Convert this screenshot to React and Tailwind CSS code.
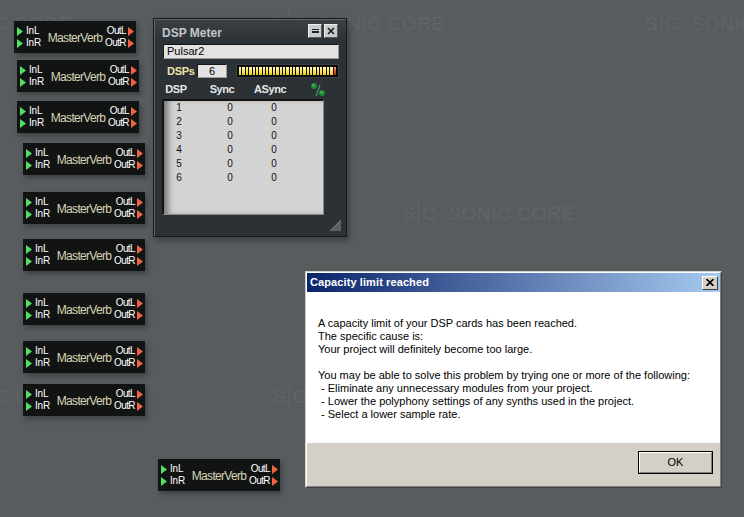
import React from 'react'

const modules = [
    'left-[14px] top-[21px]',
    'left-[17px] top-[60px]',
    'left-[17px] top-[101px]',
    'left-[23px] top-[143px]',
    'left-[23px] top-[192px]',
    'left-[23px] top-[239px]',
    'left-[23px] top-[293px]',
    'left-[23px] top-[341px]',
    'left-[23px] top-[384px]',
    'left-[158px] top-[459px]',
]

const watermarks = [
    'left-[-101px] top-[11px]',
    'left-[272px] top-[11px]',
    'left-[645px] top-[11px]',
    'left-[29px] top-[201px]',
    'left-[402px] top-[201px]',
    'left-[-100px] top-[384px]',
    'left-[273px] top-[384px]',
]

const dspRows = [1, 2, 3, 4, 5, 6]
const segments = Array.from({ length: 29 }, (_, i) => i)

const Watermark = ({ className }) => (
    <div className={`absolute ${className} flex items-center h-[24px] whitespace-nowrap text-white/[0.06] font-['Liberation_Sans',sans-serif] text-[19px] leading-none select-none`}>
        <span>S</span>
        <span className="mx-[3px] w-[1px] h-[24px] bg-white/[0.06]" />
        <span>C</span>
        <span className="ml-[13px] tracking-[0.6px]">SONIC CORE</span>
    </div>
)

const InPort = ({ label }) => (
    <div className="flex items-center h-[12px] gap-[3px]">
        <svg className="shrink-0" width="6" height="9" viewBox="0 0 6 9">
            <polygon points="0,0 6,4.5 0,9" fill="#52e05e" />
        </svg>
        <span className="text-[10px] leading-[12px] text-white tracking-[-0.2px]">{label}</span>
    </div>
)

const OutPort = ({ label }) => (
    <div className="flex items-center h-[12px] gap-[2px]">
        <span className="text-[10px] leading-[12px] text-white tracking-[-0.6px]">{label}</span>
        <svg className="shrink-0" width="6" height="9" viewBox="0 0 6 9">
            <polygon points="0,0 6,4.5 0,9" fill="#ee6444" />
        </svg>
    </div>
)

const Module = ({ className }) => (
    <div className={`absolute ${className} w-[122px] h-[32px] bg-[#121413] shadow-[2px_3px_5px_rgba(0,0,0,0.3)] flex items-center font-['Liberation_Sans',sans-serif]`}>
        <div className="w-[30px] shrink-0 flex flex-col pl-[3px]">
            <InPort label="InL" />
            <InPort label="InR" />
        </div>
        <div className="flex-1 text-center text-[12px] text-[#d9d5b8] tracking-[-0.7px] whitespace-nowrap pt-[1px]">MasterVerb</div>
        <div className="w-[30px] shrink-0 flex flex-col items-end pr-[2px]">
            <OutPort label="OutL" />
            <OutPort label="OutR" />
        </div>
    </div>
)

const TitleButton = ({ children }) => (
    <div className="w-[14px] h-[14px] bg-[#c9cbcd] border border-t-[#eeeeee] border-l-[#eeeeee] border-b-[#555a5e] border-r-[#555a5e] flex items-center justify-center">
        {children}
    </div>
)

const DspMeter = () => (
    <div className="absolute left-[153px] top-[18px] w-[194px] h-[219px] bg-[#2c3135] border border-[#171a1d] shadow-[2px_3px_6px_rgba(0,0,0,0.35)] font-['Liberation_Sans',sans-serif]">
        <div className="h-full border-t border-l border-[#5f6468] flex flex-col">
            {/* Title */}
            <div className="h-[22px] flex items-center pl-[7px] pr-[8px] bg-[linear-gradient(to_bottom,#3a4044,#2c3135)]">
                <span className="flex-1 text-[12px] font-bold text-[#c2c6ca] pt-[3px]">DSP Meter</span>
                <div className="flex gap-[2px]">
                    <TitleButton>
                        <div className="flex flex-col gap-[1px]">
                            <div className="w-[7px] h-[1px] bg-[#222]" />
                            <div className="w-[7px] h-[2px] bg-[#222]" />
                        </div>
                    </TitleButton>
                    <TitleButton>
                        <svg width="8" height="8" viewBox="0 0 8 8">
                            <path d="M1 1 L7 7 M7 1 L1 7" stroke="#1a1a1a" strokeWidth="1.6" />
                        </svg>
                    </TitleButton>
                </div>
            </div>

            {/* Name field */}
            <div className="ml-[8px] mt-[2px] w-[176px] h-[15px] bg-[#e2e2e2] border border-[#151515] border-b-[#9a9a9a] border-r-[#9a9a9a] flex items-center pl-[3px] text-[11px] text-black">
                Pulsar2
            </div>

            {/* DSPs row */}
            <div className="mt-[5px] flex items-center h-[14px]">
                <span className="ml-[12px] w-[30px] text-[11px] font-bold text-[#ede2a6] tracking-[-0.3px]">DSPs</span>
                <div className="w-[30px] h-[14px] bg-[#e2e2e2] border border-[#151515] border-b-[#9a9a9a] border-r-[#9a9a9a] flex items-center justify-center text-[11px] text-black">
                    6
                </div>
                <div className="ml-[9px] w-[103px] h-[14px] bg-[#0c0c0c] border border-[#3b3f42] p-[2px] flex gap-[1px]">
                    {segments.map((i) => (
                        <div
                            key={i}
                            className={i === segments.length - 1
                                ? 'flex-1 bg-[linear-gradient(to_bottom,#ff9a9a,#e63a3a_60%,#c02828)]'
                                : 'flex-1 bg-[linear-gradient(to_bottom,#fffcd0,#fbe852_50%,#e6cc30)]'}
                        />
                    ))}
                </div>
            </div>

            {/* Header */}
            <div className="mt-[4px] h-[14px] flex items-center pl-[7px] text-[11px] font-bold text-[#e6e8ea] tracking-[-0.4px]">
                <span className="w-[28px] text-center">DSP</span>
                <span className="w-[64px] text-center">Sync</span>
                <span className="w-[30px] text-center">ASync</span>
                <svg className="ml-[26px]" width="16" height="15" viewBox="0 0 16 15">
                    <line x1="10" y1="3" x2="6" y2="14" stroke="#3c8c72" strokeWidth="1.4" />
                    <circle cx="4" cy="4" r="3" fill="#1f8a2e" />
                    <circle cx="3.3" cy="3.2" r="1" fill="#5fd06a" />
                    <circle cx="12" cy="11" r="3" fill="#1f8a2e" />
                    <circle cx="11.3" cy="10.2" r="1" fill="#5fd06a" />
                </svg>
            </div>

            {/* List */}
            <div className="ml-[7px] mt-[3px] w-[162px] h-[116px] bg-[#d3d3d3] border-t-2 border-l-2 border-[#141414] border-r border-b border-r-[#8a8a8a] border-b-[#8a8a8a] shadow-[inset_7px_0_6px_-3px_rgba(0,0,0,0.45)]">
                {dspRows.map((n) => (
                    <div key={n} className="grid grid-cols-[30px_72px_16px] h-[14px] items-center text-[10px] text-[#111] leading-none">
                        <span className="text-center">{n}</span>
                        <span className="text-center">0</span>
                        <span className="text-center">0</span>
                    </div>
                ))}
            </div>

            {/* Grip */}
            <div className="flex-1 flex items-end justify-end pr-[5px] pb-[5px]">
                <svg width="11" height="11" viewBox="0 0 11 11">
                    <polygon points="11,0 11,11 0,11" fill="#5c6165" />
                    <line x1="11" y1="0" x2="0" y2="11" stroke="#7a7f83" strokeWidth="1" />
                </svg>
            </div>
        </div>
    </div>
)

const CapacityDialog = () => (
    <div className="absolute left-[305px] top-[271px] w-[417px] h-[217px] border border-t-[#d4d0c8] border-l-[#d4d0c8] border-b-[#404040] border-r-[#404040] bg-[#d4d0c8] font-['Liberation_Sans',sans-serif]">
        <div className="h-full flex flex-col border border-t-white border-l-white border-b-[#808080] border-r-[#808080]">
            {/* Title bar */}
            <div className="h-[19px] flex items-center pl-[3px] pr-[2px] bg-[linear-gradient(to_right,#0a246a,#a6caf0)]">
                <span className="flex-1 text-[11px] font-bold text-white tracking-[0.1px]">Capacity limit reached</span>
                <div className="w-[16px] h-[14px] bg-[#d4d0c8] border border-t-white border-l-white border-b-[#404040] border-r-[#404040] flex items-center justify-center">
                    <svg width="8" height="7" viewBox="0 0 8 7">
                        <path d="M0.5 0 L7.5 7 M7.5 0 L0.5 7" stroke="#000" strokeWidth="1.6" />
                    </svg>
                </div>
            </div>

            {/* Message */}
            <div className="h-[151px] bg-white pl-[11px] pt-[25px] text-[11px] leading-[13px] text-black">
                <p>A capacity limit of your DSP cards has been reached.</p>
                <p>The specific cause is:</p>
                <p>Your project will definitely become too large.</p>
                <p className="mt-[13px]">You may be able to solve this problem by trying one or more of the following:</p>
                <p>&nbsp;- Eliminate any unnecessary modules from your project.</p>
                <p>&nbsp;- Lower the polyphony settings of any synths used in the project.</p>
                <p>&nbsp;- Select a lower sample rate.</p>
            </div>

            {/* Footer */}
            <div className="flex-1 flex justify-end items-start pt-[8px] pr-[7px]">
                <button className="w-[75px] h-[23px] border border-black bg-[#d4d0c8]">
                    <div className="h-full border border-t-white border-l-white border-b-[#808080] border-r-[#808080] flex items-center justify-center text-[11px] text-black">
                        OK
                    </div>
                </button>
            </div>
        </div>
    </div>
)

export default function App() {
    return (
        <div className="relative w-full h-[517px] overflow-hidden bg-[#585c5f]">
            {watermarks.map((w) => (
                <Watermark key={w} className={w} />
            ))}
            {modules.map((m) => (
                <Module key={m} className={m} />
            ))}
            <DspMeter />
            <CapacityDialog />
        </div>
    )
}
